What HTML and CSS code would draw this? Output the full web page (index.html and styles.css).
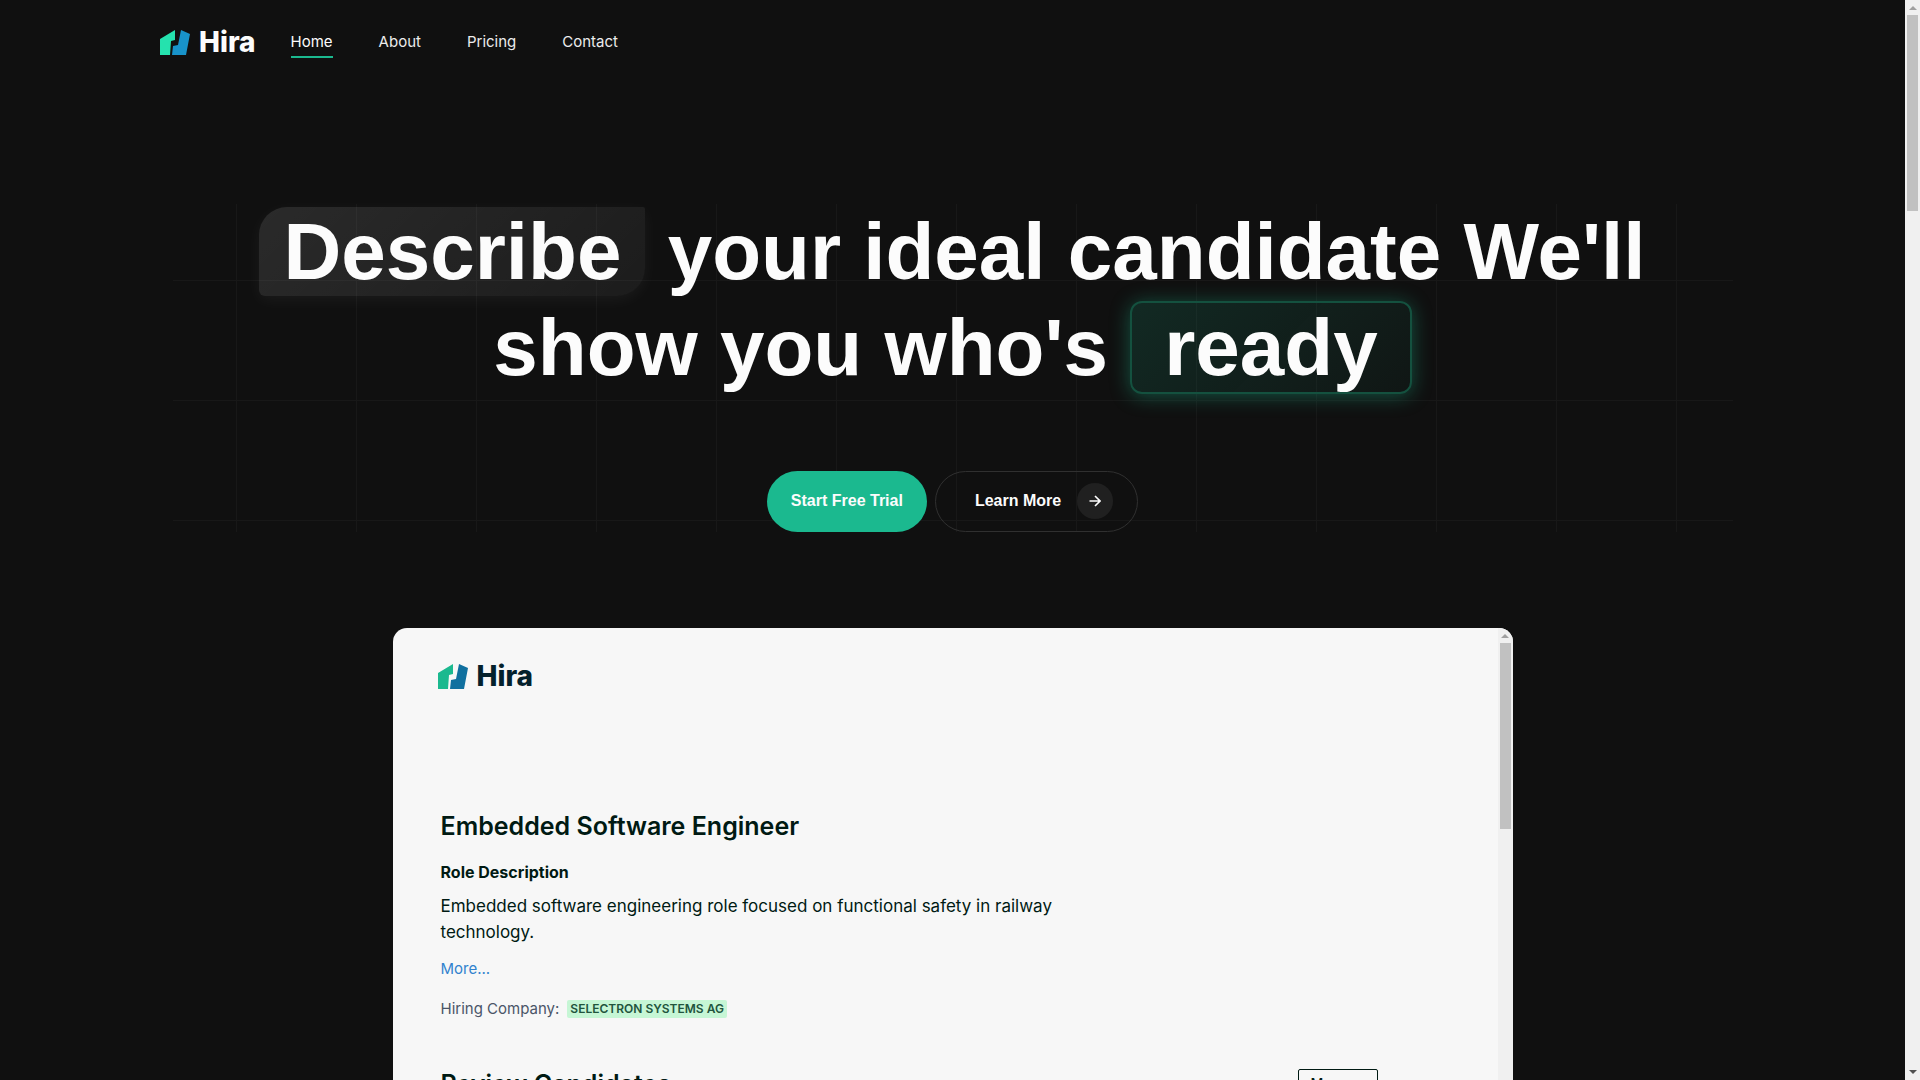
FILE: index.html
```html
<!DOCTYPE html>
<html lang="en">
<head>
<meta charset="utf-8">
<title>Hira</title>
<link rel="stylesheet" href="styles.css">
</head>
<body>
<div class="shell">
  <div class="page">
    <header class="header">
      <a class="logo" href="#">
        <svg class="logo-mark" viewBox="0 0 30 25" aria-hidden="true">
          <path fill="#25e2ae" d="M0 9 15 0V10L11 11 10 25H0Z"/>
          <path fill="#1893ca" d="M21 0 30 4 26 25H12L13 16 18 15Z"/>
        </svg>
        <span>Hira</span>
      </a>
      <nav class="nav">
        <a class="nav-link active" href="#">Home</a>
        <a class="nav-link" href="#">About</a>
        <a class="nav-link" href="#">Pricing</a>
        <a class="nav-link" href="#">Contact</a>
      </nav>
    </header>

    <main>
      <section class="hero">
        <h1 class="headline"><span class="mark-soft">Describe</span> your ideal candidate We'll show you who's <span class="mark-green">ready</span></h1>
        <div class="actions">
          <button class="btn btn-primary" type="button">Start Free Trial</button>
          <button class="btn btn-outline" type="button">Learn More
            <span class="btn-icon">
              <svg width="12" height="12" viewBox="0 0 12 12" fill="none" stroke="#fcfcfc" stroke-width="1.6" aria-hidden="true"><path d="M.5 6H11M6 1l5 5-5 5"/></svg>
            </span>
          </button>
        </div>
      </section>

      <section class="demo">
        <div class="demo-body">
          <a class="logo logo-dark" href="#">
            <svg class="logo-mark" viewBox="0 0 30 25" aria-hidden="true">
              <path fill="#1bb98f" d="M0 9 15 0V10L11 11 10 25H0Z"/>
              <path fill="#10709f" d="M21 0 30 4 26 25H12L13 16 18 15Z"/>
            </svg>
            <span>Hira</span>
          </a>
          <div class="job">
            <h2 class="title">Embedded Software Engineer</h2>
            <h3 class="subtitle">Role Description</h3>
            <p class="text">Embedded software engineering role focused on functional safety in railway technology.</p>
            <a class="more" href="#">More...</a>
            <p class="company">Hiring Company: <span class="badge">SELECTRON SYSTEMS AG</span></p>
            <div class="review">
              <h2 class="title">Review Candidates</h2>
              <button class="review-btn" type="button">More</button>
            </div>
          </div>
        </div>
        <div class="scrollbar" aria-hidden="true">
          <span class="arrow-up"></span>
          <span class="thumb thumb-demo"></span>
        </div>
      </section>
    </main>
  </div>
  <div class="scrollbar" aria-hidden="true">
    <span class="arrow-up"></span>
    <span class="thumb thumb-page"></span>
    <span class="arrow-down"></span>
  </div>
</div>
</body>
</html>
```
FILE: styles.css
```css
* { box-sizing: border-box; }

body {
  margin: 0;
  background: #101010;
  color: #fcfcfc;
  font-family: Inter, "Liberation Sans", sans-serif;
}

a { color: inherit; text-decoration: none; }
h1, h2, h3, p { margin: 0; }

.shell {
  display: flex;
  height: 100vh;
  overflow: hidden;
}

.page {
  flex: 1;
  min-width: 0;
  overflow: hidden;
}

/* Header */
.header {
  display: flex;
  align-items: center;
  gap: 35px;
  height: 84px;
  padding: 0 160px;
}

.logo {
  display: flex;
  align-items: center;
  gap: 9px;
  width: max-content;
  font-size: 28px;
  font-weight: 800;
  line-height: 32px;
}

.logo-mark { width: 30px; height: 25px; }

.nav { display: flex; gap: 46px; }

.nav-link {
  position: relative;
  font-size: 15px;
  line-height: 24px;
  color: #ececec;
}

.nav-link.active { color: #fcfcfc; }

.nav-link.active::after {
  content: "";
  position: absolute;
  left: 0;
  right: 0;
  bottom: -4px;
  height: 2px;
  background: #1bb98f;
}

/* Hero */
.hero {
  max-width: 1560px;
  margin: 120px auto 0;
  font-family: "Liberation Sans", Arial, sans-serif;
  text-align: center;
  background-image:
    linear-gradient(#181818 1px, transparent 1px),
    linear-gradient(90deg, #181818 1px, transparent 1px);
  background-size: 120px 120px;
  background-position: 63px 76px;
}

.headline {
  padding: 0 80px;
  font-size: 80px;
  font-weight: 700;
  line-height: 96px;
}

.mark-soft {
  padding: 0 24px;
  border-radius: 28px 2px 28px 6px;
  background: linear-gradient(135deg, rgba(255, 255, 255, .11), rgba(255, 255, 255, .05));
  box-shadow: 0 4px 16px rgba(255, 255, 255, .05);
}

.mark-green {
  padding: 0 32px;
  border: 2px solid #14513f;
  border-radius: 12px;
  background: linear-gradient(135deg, rgba(27, 185, 143, .15), rgba(27, 185, 143, .04));
  box-shadow: 0 2px 20px rgba(27, 185, 143, .4);
}

.actions {
  display: flex;
  justify-content: center;
  gap: 8px;
  padding-top: 75px;
}

.btn {
  display: flex;
  align-items: center;
  gap: 16px;
  height: 61px;
  border: 1px solid transparent;
  border-radius: 31px;
  color: #fcfcfc;
  font-family: inherit;
  font-size: 16px;
  font-weight: 700;
}

.btn-primary {
  padding: 0 23px 2px;
  background: #1bb98f;
}

.btn-outline {
  padding: 0 24px 1px 39px;
  border-color: #303030;
  background: transparent;
}

.btn-icon {
  display: grid;
  place-items: center;
  width: 36px;
  height: 36px;
  border-radius: 50%;
  background: #202020;
}

/* Product preview */
.demo {
  display: flex;
  max-width: 1120px;
  height: 800px;
  margin: 96px auto 0;
  border-radius: 14px;
  overflow: hidden;
  background: #f7f7f7;
  color: #001a13;
}

.demo-body { flex: 1; padding: 32px 48px 0 45px; }

.logo-dark { color: #04212c; }

.job {
  padding: 116px 72px 0 3px;
}

.title {
  font-size: 25px;
  font-weight: 600;
  line-height: 36px;
}

.subtitle {
  padding-top: 16px;
  font-size: 16px;
  font-weight: 700;
  line-height: 24px;
}

.text {
  max-width: 640px;
  padding-top: 9px;
  font-size: 17px;
  line-height: 26px;
}

.more {
  display: block;
  width: max-content;
  padding-top: 12px;
  font-size: 15px;
  line-height: 24px;
  color: #3182ce;
}

.company {
  display: flex;
  align-items: center;
  gap: 8px;
  padding-top: 16px;
  font-size: 15px;
  line-height: 24px;
  color: #4a5568;
}

.badge {
  padding: 0 3px;
  border-radius: 2px;
  background: #c6f6d5;
  color: #22543d;
  font-size: 12px;
  font-weight: 600;
  line-height: 18px;
}

.review {
  display: flex;
  align-items: center;
  justify-content: space-between;
  padding-top: 45px;
}

.review-btn {
  width: 80px;
  height: 30px;
  padding: 0 12px;
  border: 1px solid #001a13;
  border-radius: 2px;
  background: transparent;
  color: #001a13;
  font: 500 14px/20px Inter, sans-serif;
  text-align: left;
}

/* Scroll bars */
.scrollbar {
  display: flex;
  flex-direction: column;
  align-items: center;
  width: 15px;
  background: #f0f0f0;
}

.arrow-up {
  height: 15px;
  padding-top: 6px;
}

.arrow-up::before, .arrow-down::before {
  content: "";
  display: block;
  border: 4px solid transparent;
  border-top-width: 0;
  border-bottom-color: #a0a0a0;
}

.arrow-down {
  height: 15px;
  margin-top: auto;
  padding-top: 5px;
}

.arrow-down::before {
  border-width: 4px 4px 0;
  border-top-color: #505050;
}

.thumb { width: 11px; background: #c1c1c1; }
.thumb-page { height: 196px; }
.thumb-demo { height: 186px; }
```
